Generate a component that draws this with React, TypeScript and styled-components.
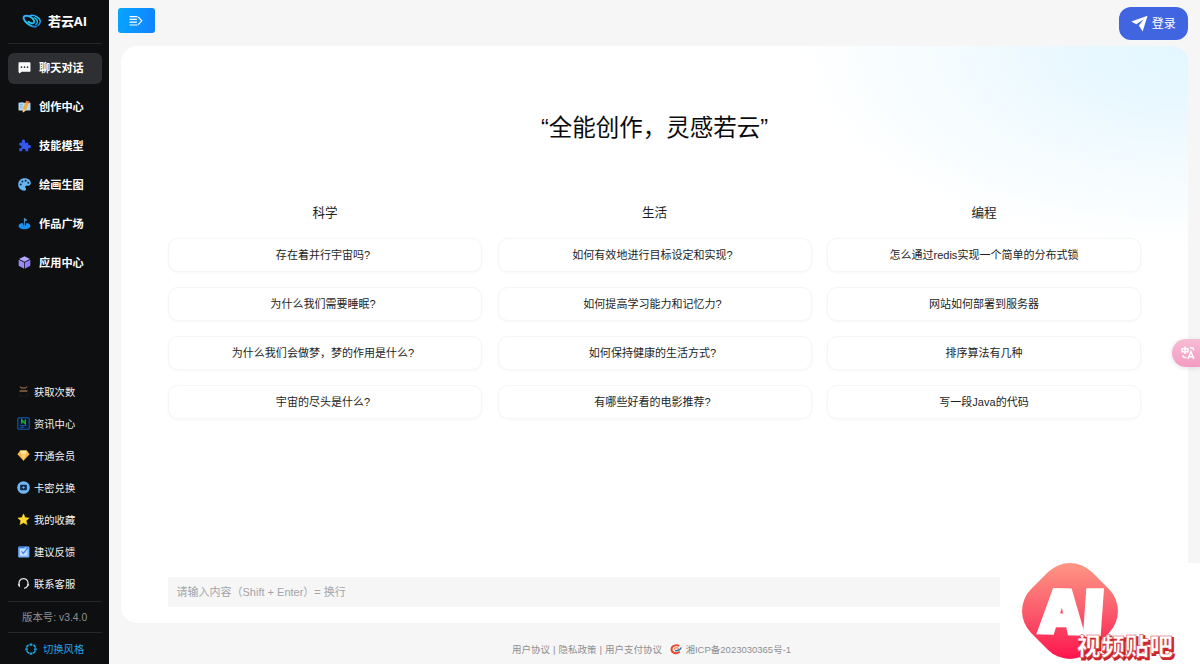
import React from 'react';
import styled, { createGlobalStyle } from 'styled-components';

const GlobalStyle = createGlobalStyle`
  * { box-sizing: border-box; }
  html, body { margin: 0; padding: 0; }
  body {
    width: 1200px;
    height: 664px;
    overflow: hidden;
    font-family: "Liberation Sans", "Noto Sans CJK SC", sans-serif;
    background: #f6f6f6;
    color: #1c1e24;
  }
`;

const Page = styled.div`
  position: relative;
  display: flex;
  width: 1200px;
  height: 664px;
  overflow: hidden;
`;

const Sidebar = styled.aside`
  display: flex;
  flex-direction: column;
  width: 109px;
  flex: none;
  padding: 0 7.5px 0 8px;
  background: #0d0f11;
`;

const Brand = styled.div`
  display: flex;
  align-items: center;
  height: 44px;
  padding: 0 0 2px 14px;
  gap: 6px;
  border-bottom: 1px solid #26282b;
  color: #fff;
  font: bold 13px/20px "Open Sans", "Noto Sans CJK SC", sans-serif;
  letter-spacing: -0.1px;
  white-space: nowrap;
`;

const MainMenu = styled.nav`
  display: flex;
  flex-direction: column;
  gap: 8.1px;
  padding-top: 8.5px;
`;

const MainItem = styled.a<{ $active?: boolean }>`
  display: flex;
  align-items: center;
  gap: 7px;
  height: 31px;
  padding: 0 0 2px 9px;
  border-radius: 6px;
  background: ${p => (p.$active ? '#2d2f32' : 'transparent')};
  color: #fff;
  font-size: 11.2px;
  font-weight: 700;
  white-space: nowrap;
  svg { width: 13px; height: 13px; flex: none; margin: 1px 1px 0 1px; }
`;

const SubMenu = styled.nav`
  display: flex;
  flex-direction: column;
  margin-top: auto;
  padding-bottom: 1px;
`;

const SubItem = styled.a`
  display: flex;
  align-items: center;
  gap: 4px;
  height: 32.1px;
  padding-left: 9px;
  color: #f1f1f1;
  font-size: 10.3px;
  white-space: nowrap;
  svg { width: 13px; height: 13px; flex: none; }
`;

const Version = styled.div`
  display: flex;
  align-items: center;
  height: 31px;
  padding: 0 0 2px 14px;
  border-top: 1px solid #26282b;
  color: #8f9092;
  font-size: 10.4px;
  white-space: nowrap;
`;

const StyleSwitch = styled.div`
  display: flex;
  align-items: center;
  height: 32px;
  padding-left: 17px;
  gap: 6px;
  border-top: 1px solid #26282b;
  color: #28a0e6;
  font-size: 10.3px;
  white-space: nowrap;
`;

const Main = styled.main`
  display: flex;
  flex-direction: column;
  flex: 1;
  min-width: 0;
  padding: 0 12px;
`;

const TopBar = styled.header`
  display: flex;
  align-items: flex-start;
  justify-content: space-between;
  height: 46px;
  padding: 7px 0 0;
`;

const CollapseButton = styled.button`
  display: flex;
  align-items: center;
  justify-content: center;
  width: 37px;
  height: 25px;
  margin: 1px 0 0 -3.5px;
  padding: 0;
  border: 0;
  border-radius: 3px;
  background: linear-gradient(100deg, #06a6ff, #1182ff);
`;

const LoginButton = styled.button`
  display: flex;
  align-items: center;
  justify-content: center;
  gap: 4px;
  width: 68.5px;
  height: 33px;
  padding: 0;
  margin-right: 0.5px;
  border: 0;
  border-radius: 12px;
  background: #4165e0;
  color: #fff;
  font: 12px/18px "Liberation Sans", "Noto Sans CJK SC", sans-serif;
`;

const Panel = styled.section`
  display: flex;
  flex-direction: column;
  height: 577px;
  padding: 0 47px 16px;
  border-radius: 16px;
  background: radial-gradient(ellipse 390px 200px at 100% 0, #e3f6ff 0%, #e9f8ff 30%, #f5fcff 65%, #fff 100%) #fff;
`;

const Title = styled.h1`
  margin: 64px 0 0;
  text-align: center;
  font-size: 23.5px;
  line-height: 36px;
  font-weight: 400;
  color: #0b0b0d;
`;

const Topics = styled.div`
  display: grid;
  grid-template-columns: repeat(3, 1fr);
  column-gap: 15.5px;
  margin-top: 57px;
`;

const Topic = styled.div`
  display: flex;
  flex-direction: column;
  gap: 15px;
`;

const TopicName = styled.h2`
  margin: 0;
  text-align: center;
  font-size: 12.6px;
  line-height: 20px;
  font-weight: 400;
`;

const Question = styled.div<{ $asking: boolean }>`
  display: flex;
  align-items: center;
  justify-content: center;
  height: 34px;
  padding: 0 ${p => (p.$asking ? '4px' : '0')} 2px 0;
  border: 1px solid #f5f6f7;
  border-radius: 10px;
  background: #fff;
  box-shadow: 0 1px 3px rgba(0, 0, 0, 0.035);
  font-size: 11.02px;
  color: #1c1e24;
  white-space: nowrap;
`;

const Prompt = styled.div`
  display: flex;
  align-items: center;
  height: 30px;
  margin-top: auto;
  padding: 0 0 2px 8.5px;
  background: #f6f6f6;
  color: #a3a5aa;
  font-size: 11px;
`;

const Footer = styled.footer`
  display: flex;
  align-items: center;
  justify-content: center;
  gap: 8.5px;
  height: 41px;
  padding: 11px 0 0;
  margin-left: -6px;
  color: #8f8f8f;
  font-size: 9.5px;
  white-space: nowrap;
`;

const Policies = styled.span`
  word-spacing: 0.4px;
`;

const Record = styled.span`
  display: flex;
  align-items: center;
  gap: 3px;
`;

const TranslateTab = styled.div`
  position: absolute;
  right: 0;
  top: 339px;
  display: flex;
  align-items: center;
  width: 28px;
  height: 28px;
  padding-left: 9px;
  border-radius: 14px 0 0 14px;
  background: linear-gradient(#f7bcd4, #f29bc2);
  box-shadow: 0 1px 5px rgba(0, 0, 0, 0.12);
`;

const Stamp = styled.div`
  position: absolute;
  right: 0;
  bottom: 0;
  width: 200px;
  height: 101px;
  background: #fff;
  svg { display: block; }
`;

const LogoIcon = () => (
  <svg width="20" height="16" viewBox="0 0 20 16" fill="none">
    <defs>
      <linearGradient id="logo" x1="0" y1="0" x2="1" y2="1">
        <stop offset="0" stopColor="#36a9ff" />
        <stop offset="0.6" stopColor="#20c8ee" />
        <stop offset="1" stopColor="#246cd8" />
      </linearGradient>
    </defs>
    <path d="M14.5 13.4C11.2 14.6 6 12 3 8.2C.6 5.2 1.2 2.6 4.4 2.7C8.4 2.8 12.4 6 12.3 8.8C12.1 10.8 9 10.6 6.6 8.8" stroke="url(#logo)" strokeWidth="1.9" strokeLinecap="round" />
    <path d="M8.4 2.4C12.6 1.4 18.4 5 18.3 8.6C18.2 10.2 17.3 11.4 16 12.3M12.6 4.8C15.8 6.4 16.4 9.8 13.9 11.5" stroke="url(#logo)" strokeWidth="1.5" strokeLinecap="round" />
  </svg>
);

const ChatIcon = () => (
  <svg viewBox="0 0 15 15">
    <path d="M1.6 1.5h11.8a1 1 0 0 1 1 1v9a1 1 0 0 1-1 1H4.2L1.6 14.3l-1-1.8V2.5a1 1 0 0 1 1-1z" fill="#fff" />
    <circle cx="4" cy="7" r="1" fill="#202225" /><circle cx="7.5" cy="7" r="1" fill="#202225" /><circle cx="11" cy="7" r="1" fill="#202225" />
  </svg>
);

const WriteIcon = () => (
  <svg viewBox="0 0 15 15">
    <path d="M.6 3.2l4.9-.6 2 .8 2-.8 4.9.6v9H9L7.5 13 6 12.2H.6z" fill="#b7d9f4" />
    <path d="M2.3 5.2h3.2M2.3 7.2h3.2M2.3 9.2h2.5" stroke="#6e9fc6" strokeWidth=".8" />
    <path d="M9.7.9l3.4 1.2L8.8 12l-3.2 2.3-.3-3.9z" fill="#f4aa38" />
    <path d="M9.7.9l3.4 1.2-.8 1.8-3.4-1.2z" fill="#df655f" />
    <path d="M5.3 10.4l3.5 1.6-3.2 2.3z" fill="#f6d3a0" />
  </svg>
);

const PuzzleIcon = () => (
  <svg viewBox="0 0 15 15">
    <path d="M1.5 4.3h3.1C3.8 2.3 4.7.6 6.3.6s2.5 1.7 1.7 3.7h3.8v3c1.8-.8 3 .1 3 1.5s-1.2 2.4-3 1.6V14H8.4c.6-1.8-.3-2.7-1.7-2.7S4.5 12.3 5 14H1.5v-3.5c1.7.7 2.6-.2 2.6-1.4S3.2 7 1.5 7.7z" fill="#3558ee" />
  </svg>
);

const PaletteIcon = () => (
  <svg viewBox="0 0 15 15">
    <path d="M7.5.4C3.4.4.2 3.5.2 7.5s3.2 7.1 7.1 7.1c1.2 0 2-.8 2-1.9 0-1.5-1-1.4-1-2.4 0-.9.7-1.5 1.5-1.5h1.6c2 0 3.4-1.4 3.4-3.1C14.8 2.7 11.6.4 7.5.4z" fill="#67b5f7" />
    <g fill="#10273a"><circle cx="3.1" cy="7.4" r="1.15" /><circle cx="5" cy="4" r="1.15" /><circle cx="8.8" cy="3.3" r="1.15" /><circle cx="11.9" cy="5.6" r="1.15" /></g>
  </svg>
);

const FlagIcon = () => (
  <svg viewBox="0 0 15 15">
    <path d="M5.3 6.9C2.7 7.2.7 8.5.7 10.3c0 2.2 3 3.7 6.8 3.7s6.8-1.5 6.8-3.7c0-1.8-1.9-3.1-4.6-3.4l-1 3H6.5z" fill="#1a91f4" />
    <path d="M6.8.9v9.2h1.1V5.3l3.2-1.8z" fill="#4a91c8" />
  </svg>
);

const CubeIcon = () => (
  <svg viewBox="0 0 15 15">
    <path d="M7.5.4l6.3 3-6.3 3.2-6.3-3.2z" fill="#b4a5ff" />
    <path d="M.8 4.2l6.3 3.2v7.2L.8 11.3z" fill="#9b8bf6" />
    <path d="M14.2 4.2L7.9 7.4v7.2l6.3-3.3z" fill="#9080f0" />
  </svg>
);

const TimesIcon = () => (
  <svg viewBox="0 0 13 13" fill="none">
    <path d="M2.8 1.6l1.8 1.5M10.2 1.6L8.4 3.1M4.2 3h4.6" stroke="#b47b46" strokeWidth="1" />
    <path d="M2.6 6h7.8" stroke="#c08a58" strokeWidth="1.1" />
    <path d="M2.5 8.2v3h8v-3" stroke="#201c1a" strokeWidth="1" />
  </svg>
);

const NewsIcon = () => (
  <svg viewBox="0 0 13 13" fill="none">
    <rect x=".8" y=".8" width="11.4" height="11.4" rx="1" fill="#07172f" stroke="#1959a9" strokeWidth="1.1" />
    <path d="M4.7 6.8V2.8l3.6 4V2.6" stroke="#10b321" strokeWidth="1.4" />
    <path d="M3 8.7h6.5M3 10.3h4" stroke="#2064b8" strokeWidth=".9" />
  </svg>
);

const GemIcon = () => (
  <svg viewBox="0 0 13 13">
    <path d="M3.2 1.6h6.6l2.8 3.6-6.1 6.6L.4 5.2z" fill="#f8b846" />
    <path d="M3.2 1.6h6.6L8.8 5.2H4.2z" fill="#ffe39a" />
    <path d="M4.2 5.2h4.6l-2.3 6.6z" fill="#ffcf71" />
  </svg>
);

const CardIcon = () => (
  <svg viewBox="0 0 13 13">
    <circle cx="6.5" cy="6.5" r="6.3" fill="#70b6f4" />
    <rect x="3.1" y="3.8" width="6.8" height="5.4" rx=".8" fill="#102e50" />
    <path d="M5.2 6.5h2.6M6.5 5.4v2.2" stroke="#70b6f4" strokeWidth=".9" />
  </svg>
);

const StarIcon = () => (
  <svg viewBox="0 0 13 13">
    <path d="M6.5.8l1.7 3.7 4 .5-3 2.7.9 4-3.6-2-3.6 2 .9-4-3-2.7 4-.5z" fill="#ffda2e" stroke="#ffda2e" strokeWidth=".4" strokeLinejoin="round" />
  </svg>
);

const FeedbackIcon = () => (
  <svg viewBox="0 0 13 13" fill="none">
    <rect x="1.2" y="1.6" width="11.2" height="10.8" rx="1" fill="#78b4ff" />
    <path d="M1.8 1.2h5.4v1.6H1.8z" fill="#246fd2" />
    <rect x="3" y="3.8" width="7.4" height="7" rx=".5" fill="#c1dcff" />
    <path d="M4.5 6.4L6.3 8.3 11.2 2.4" stroke="#397bdc" strokeWidth="1.1" />
  </svg>
);

const ServiceIcon = () => (
  <svg viewBox="0 0 13 13" fill="none" stroke="#dedede" strokeWidth="1.3" strokeLinecap="round">
    <path d="M2.5 9.2C.8 4.8 3 1.7 6.5 1.7s5.8 3.1 3.9 7.4C9.8 10.5 9 11 7.6 11.2" />
    <path d="M1.4 7.4l1.1 1.8M11.6 7.4l-1.1 1.8" strokeWidth="1.2" />
  </svg>
);

const SwitchIcon = () => (
  <svg width="12" height="12" viewBox="0 0 12 12" fill="none" stroke="#20b4df" strokeWidth="1.5">
    <path d="M3.6 1.9A4.7 4.7 0 0 0 1.5 4.6M8.4 1.9a4.7 4.7 0 0 1 2.1 2.7M1.7 8A4.7 4.7 0 0 0 4.2 10.3M10.3 8a4.7 4.7 0 0 1-2.5 2.3" />
    <path d="M4.6 1.6h2.8M.3 6.3h2.6M9.1 6.3h2.6M4.6 10.6h2.8" stroke="#1a9be6" strokeWidth="2.2" />
  </svg>
);

const ExpandIcon = () => (
  <svg width="14" height="12" viewBox="0 0 14 12" fill="none" stroke="#fff" strokeWidth="1.2">
    <path d="M.5 1.6h8M.5 4.4h7.4M.5 7.2h7.4M.5 10h8M9.2 2l3.6 3.8-3.6 3.8" />
  </svg>
);

const PlaneIcon = () => (
  <svg width="17" height="17" viewBox="0 0 17 17" fill="#fff">
    <path d="M16.6.7L.3 6.6 5.2 9.2 12.6 4.6 7.9 10.4 11.6 16.6z" />
  </svg>
);

const EmblemIcon = () => (
  <svg width="12" height="11" viewBox="0 0 12 11" fill="none">
    <path d="M9.2 2C6.6.2 1.5 1.5 1.5 5.3c0 4 5.2 5.2 8.2 2.3" stroke="#e44a2b" strokeWidth="1.9" />
    <path d="M4 5.6c.4-2.3 4.1-2.7 4.5-.6" stroke="#f08752" strokeWidth="1.2" />
    <path d="M5 6.6c2.6.5 5.2-.7 6.4-3.1" stroke="#34739b" strokeWidth="1.4" />
  </svg>
);

const TranslateIcon = () => (
  <svg width="15" height="14" viewBox="0 0 15 14" fill="none" stroke="#fff" strokeWidth="1.5">
    <path d="M1.1 2.7h5.8v3H1.1zM4 .4v7.6M9 1.8h1.8q1.8 0 1.8 2.4M1.8 9.2q0 2.2 2 2.2h1.4M6.9 13l3-7.2 3 7.2M8 10.8h3.8" />
  </svg>
);

const mainItems = [
  { label: '聊天对话', Icon: ChatIcon },
  { label: '创作中心', Icon: WriteIcon },
  { label: '技能模型', Icon: PuzzleIcon },
  { label: '绘画生图', Icon: PaletteIcon },
  { label: '作品广场', Icon: FlagIcon },
  { label: '应用中心', Icon: CubeIcon },
];

const subItems = [
  { label: '获取次数', Icon: TimesIcon },
  { label: '资讯中心', Icon: NewsIcon },
  { label: '开通会员', Icon: GemIcon },
  { label: '卡密兑换', Icon: CardIcon },
  { label: '我的收藏', Icon: StarIcon },
  { label: '建议反馈', Icon: FeedbackIcon },
  { label: '联系客服', Icon: ServiceIcon },
];

const topics = [
  { name: '科学', questions: ['存在着并行宇宙吗?', '为什么我们需要睡眠?', '为什么我们会做梦，梦的作用是什么?', '宇宙的尽头是什么?'] },
  { name: '生活', questions: ['如何有效地进行目标设定和实现?', '如何提高学习能力和记忆力?', '如何保持健康的生活方式?', '有哪些好看的电影推荐?'] },
  { name: '编程', questions: ['怎么通过redis实现一个简单的分布式锁', '网站如何部署到服务器', '排序算法有几种', '写一段Java的代码'] },
];

const StampLogo = () => (
  <svg width="200" height="101" viewBox="0 0 200 101">
    <defs>
      <linearGradient id="stamp" x1="0" y1="0" x2="1" y2="1">
        <stop offset="0.08" stopColor="#ff9a86" />
        <stop offset="0.5" stopColor="#fa5c6c" />
        <stop offset="0.92" stopColor="#ff0f4b" />
      </linearGradient>
    </defs>
    <rect x="27" y="5" width="86" height="86" rx="31" transform="rotate(45 70 48)" fill="url(#stamp)" />
    <g fill="#fff" stroke="#fff" strokeLinejoin="miter" fontFamily="Open Sans, sans-serif" fontWeight="800">
      <text transform="translate(39.5 69) rotate(2)" fontSize="59" strokeWidth="4.5">A</text>
      <text transform="translate(81.5 70.5) skewX(-4)" fontSize="60" strokeWidth="6">I</text>
    </g>
    <g fontFamily="Noto Sans CJK SC, sans-serif" fontWeight="900" fontSize="23.5">
      <text x="78.5" y="93.7" textLength="96" fill="#c9252b" stroke="#c9252b" strokeWidth="1.6">视频贴吧</text>
      <text x="77" y="92.4" textLength="96" fill="#fff" stroke="#d8333c" strokeWidth="0.5">视频贴吧</text>
    </g>
  </svg>
);

export default function App() {
  return (
    <>
      <GlobalStyle />
      <Page>
        <Sidebar>
          <Brand><LogoIcon />若云AI</Brand>
          <MainMenu>
            {mainItems.map(({ label, Icon }, i) => (
              <MainItem key={label} $active={i === 0}><Icon />{label}</MainItem>
            ))}
          </MainMenu>
          <SubMenu>
            {subItems.map(({ label, Icon }) => (
              <SubItem key={label}><Icon />{label}</SubItem>
            ))}
          </SubMenu>
          <Version>版本号: v3.4.0</Version>
          <StyleSwitch><SwitchIcon />切换风格</StyleSwitch>
        </Sidebar>
        <Main>
          <TopBar>
            <CollapseButton aria-label="展开"><ExpandIcon /></CollapseButton>
            <LoginButton><PlaneIcon />登录</LoginButton>
          </TopBar>
          <Panel>
            <Title>“全能创作，灵感若云”</Title>
            <Topics>
              {topics.map(topic => (
                <Topic key={topic.name}>
                  <TopicName>{topic.name}</TopicName>
                  {topic.questions.map(q => <Question key={q} $asking={q.endsWith('?')}>{q}</Question>)}
                </Topic>
              ))}
            </Topics>
            <Prompt>请输入内容（Shift + Enter）= 换行</Prompt>
          </Panel>
          <Footer>
            <Policies>用户协议 | 隐私政策 | 用户支付协议</Policies>
            <Record><EmblemIcon />湘ICP备2023030365号-1</Record>
          </Footer>
        </Main>
        <TranslateTab><TranslateIcon /></TranslateTab>
        <Stamp><StampLogo /></Stamp>
      </Page>
    </>
  );
}
